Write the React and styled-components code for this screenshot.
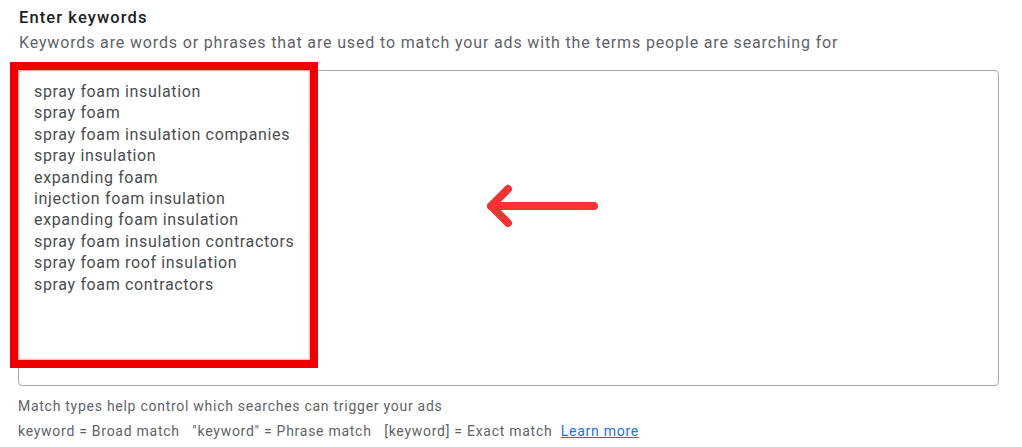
import React from "react"
import styled, { createGlobalStyle } from "styled-components"

const keywords = [
  "spray foam insulation",
  "spray foam",
  "spray foam insulation companies",
  "spray insulation",
  "expanding foam",
  "injection foam insulation",
  "expanding foam insulation",
  "spray foam insulation contractors",
  "spray foam roof insulation",
  "spray foam contractors",
]

const App = () => {
  return (
    <Page>
      <Global />
      <Title>Enter keywords</Title>
      <Subtitle>
        Keywords are words or phrases that are used to match your ads with the terms people are searching for
      </Subtitle>
      <Field>
        <List>
          {keywords.map((k) => (
            <Line key={k}>{k}</Line>
          ))}
        </List>
        <Highlight />
        <Arrow width="120" height="50" viewBox="0 0 120 50">
          <path
            d="M111 25 H8 M25 8 L8 25 L25 42"
            fill="none"
            stroke="#f23434"
            strokeWidth="8"
            strokeLinecap="round"
            strokeLinejoin="round"
          />
        </Arrow>
      </Field>
      <HelpBlock>
        <Help>Match types help control which searches can trigger your ads</Help>
        <Help>
          keyword = Broad match&nbsp;&nbsp; "keyword" = Phrase match&nbsp;&nbsp; [keyword] = Exact match&nbsp;&nbsp;
          <Link href="#">Learn more</Link>
        </Help>
      </HelpBlock>
    </Page>
  )
}

export default App

const Global = createGlobalStyle`
body {
  margin: 0;
  background: #ffffff;
  font-family: Roboto, "Liberation Sans", sans-serif;
}
`
const Page = styled.div`
width: 1022px;
height: 447px;
padding: 7px 23px 0 18px;
box-sizing: border-box;
overflow: hidden;
`
const Title = styled.div`
font-size: 16.5px;
font-weight: 500;
color: #202124;
line-height: 22px;
padding-left: 1px;
letter-spacing: 1.1px;
`
const Subtitle = styled.div`
margin-top: 2px;
font-size: 16px;
color: #5f6368;
line-height: 24px;
padding-left: 1px;
letter-spacing: 0.85px;
`
const Field = styled.div`
position: relative;
margin-top: 15px;
height: 316px;
border: 1px solid #a8a8a8;
border-radius: 4px;
box-sizing: border-box;
padding: 10px 15px;
`
const List = styled.div`
display: flex;
flex-direction: column;
`
const Line = styled.div`
font-size: 16px;
color: #4a4d50;
line-height: 21.4px;
letter-spacing: 0.65px;
`
const Highlight = styled.div`
position: absolute;
left: -9px;
top: -9px;
width: 292px;
height: 290px;
border: 8px solid #ee0000;
box-shadow: inset 0 0 2px 1px #f3b0b0;
`
const Arrow = styled.svg`
position: absolute;
left: 464px;
top: 110px;
`
const HelpBlock = styled.div`
margin-top: 8px;
`
const Help = styled.div`
font-size: 14px;
color: #5f6368;
line-height: 25px;
letter-spacing: 0.73px;
`
const Link = styled.a`
color: #1a73e8;
text-decoration: underline;
`
